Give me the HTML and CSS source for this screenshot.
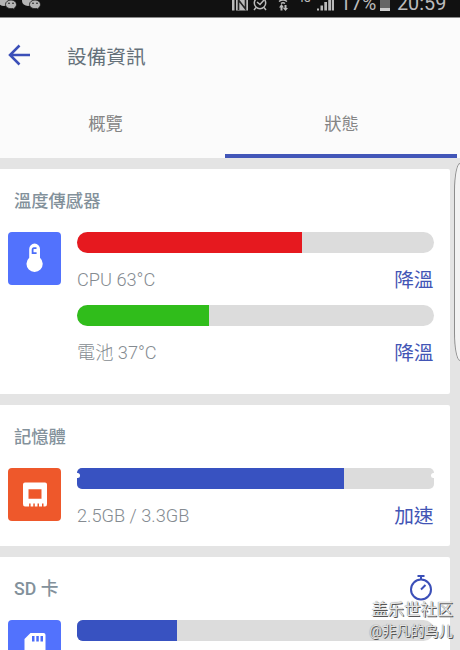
FILE: index.html
```html
<!DOCTYPE html>
<html lang="zh-Hant">
<head>
  <meta charset="utf-8">
  <title>設備資訊</title>
  <link rel="stylesheet" href="styles.css">
</head>
<body>
  <div class="statusbar">
    <svg class="status-chat" width="42" height="17" viewBox="0 0 42 17">
      <g fill="#b5b5b5">
        <ellipse cx="4" cy="1" rx="6" ry="5"/>
        <ellipse cx="28" cy="1" rx="6" ry="5"/>
      </g>
      <g fill="#b5b5b5" stroke="#111" stroke-width=".8">
        <path d="M11 0c3 0 5.500 2 5.500 4.400 0 1.500-.8 2.700-2 3.500l.2 1.600-2-1c-4 .7-7.200-1.300-7.200-4.100C5.500 2 8 0 11 0z"/>
        <path d="M35 0c3 0 5.500 2 5.500 4.400 0 1.500-.8 2.700-2 3.500l.2 1.600-2-1c-4 .7-7.200-1.300-7.200-4.100C29.500 2 32 0 35 0z"/>
      </g>
      <g fill="#111">
        <circle cx="9" cy="3.200" r=".8"/><circle cx="13" cy="3.200" r=".8"/>
        <circle cx="33" cy="3.200" r=".8"/><circle cx="37" cy="3.200" r=".8"/>
      </g>
    </svg>
    <svg class="status-icons" width="102" height="17" viewBox="0 0 102 17">
      <path d="M0 0h2.500v10.500H0zM4 0h12v10.500H4z" fill="#bbb"/>
      <path d="M6.500 10V0l7 9V0" fill="none" stroke="#222" stroke-width="1.600"/>
      <g fill="none" stroke="#bbb" stroke-width="1.500">
        <circle cx="28" cy="3" r="5.700"/>
        <path d="M25 2l3 2.500L32 0M24 7.500l-2 2.500M32 7.500l2 2.500"/>
        <path d="M47 1.500q4-3 8 0M49 3.500q2-1.600 4 0"/>
      </g>
      <path d="M48.500 10.500v-3H47L49.500 4l2.500 3.500h-1.500v3zM52.500 5h2v3H56l-2.500 3L51 8h1.500z" fill="#bbb"/>
      <path d="M85 10.500V8.500h2v2zM88.500 10.500v-5H91v5zM92.300 10.500V2H95v8.500zM96.200 10.500V0H99v10.500zM99.800 10.500V0h2.200v10.500z" fill="#bbb"/>
    </svg>
    <span class="status-net">4G</span>
    <span class="status-percent">17%</span>
    <span class="status-battery"></span>
    <span class="status-time">20:59</span>
  </div>

  <header class="header">
    <div class="toolbar">
      <svg class="back" width="22" height="22" viewBox="0 0 22 22">
        <path d="M11.500 1.500L2 11l9.500 9.500M2 11h20" fill="none" stroke="#3b4fb8" stroke-width="2.500"/>
      </svg>
      <h1>設備資訊</h1>
    </div>
    <nav class="tabs">
      <a class="tab">概覽</a>
      <a class="tab active">狀態</a>
    </nav>
  </header>

  <main>
    <section class="card card-temp">
      <div class="card-head"><h2>溫度傳感器</h2></div>
      <div class="card-body">
        <div class="icon blue">
          <svg width="53" height="53" viewBox="0 0 53 53">
            <path d="M21.200 17a5.400 5.400 0 0 1 10.800 0v8.800a8.100 8.100 0 1 1-10.800 0z" fill="#fff"/>
            <path d="M28.500 16.200h-2.700a1.200 1.200 0 0 0-1.200 1.200v3.800h4" fill="none" stroke="#4a6cfa" stroke-width="1.800"/>
          </svg>
        </div>
        <div class="meters">
          <div class="bar"><div class="fill red" style="width: 63%"></div></div>
          <div class="row"><span>CPU 63°C</span><a>降溫</a></div>
          <div class="bar"><div class="fill green" style="width: 37%"></div></div>
          <div class="row"><span>電池 37°C</span><a>降溫</a></div>
        </div>
      </div>
    </section>

    <section class="card card-memory">
      <div class="card-head"><h2>記憶體</h2></div>
      <div class="card-body">
        <div class="icon orange">
          <svg width="53" height="53" viewBox="0 0 53 53">
            <path fill="#fff" fill-rule="evenodd" d="M17 14.500h20q2 0 2 2V36q0 2.500-2 2.500h-1.500V35.500h-1.500v3h-3v-3h-1.500v3h-2.700v-3h-1.500v3h-2.700v-3h-1.500v3H17q-2 0-2-2.500V16.500q0-2 2-2zM20.500 21.200v9.500h13v-9.500z"/>
          </svg>
        </div>
        <div class="meters">
          <div class="bar notched"><div class="fill indigo" style="width: 75%"></div></div>
          <div class="row"><span>2.5GB / 3.3GB</span><a>加速</a></div>
        </div>
      </div>
    </section>

    <section class="card card-sd">
      <div class="card-head">
        <h2>SD 卡</h2>
        <svg class="timer" width="24" height="27" viewBox="0 0 24 27">
          <g fill="none" stroke="#3b4fb8" stroke-width="2">
            <circle cx="12" cy="15.500" r="10"/>
            <path d="M8.500 2.100h7M12 2v4M12 15.500l4.500-4.500"/>
          </g>
        </svg>
      </div>
      <div class="card-body">
        <div class="icon blue">
          <svg width="53" height="31" viewBox="0 0 53 31">
            <path d="M22.500 13H35.500q2 0 2 2V31h-21V19z" fill="#fff"/>
            <path d="M24 16h2.500v5.500H24zM28.300 16h2.500v5.500h-2.500zM32.500 16H35v5.500h-2.500z" fill="#4a6cfa"/>
          </svg>
        </div>
        <div class="meters">
          <div class="bar"><div class="fill indigo" style="width: 28%"></div></div>
        </div>
      </div>
    </section>
  </main>

  <div class="edge-handle"></div>
  <div class="watermark">
    <div class="site">盖乐世社区</div>
    <div class="user">@非凡的鸟儿</div>
  </div>
</body>
</html>
```
FILE: styles.css
```css
* {
  box-sizing: border-box;
}

body {
  margin: 0;
  width: 460px;
  height: 650px;
  overflow: hidden;
  position: relative;
  background: #e4e4e4;
  font-family: Roboto, "Noto Sans CJK TC", sans-serif;
}

h1, h2 {
  margin: 0;
}

.statusbar {
  display: flex;
  position: relative;
  height: 18px;
  overflow: hidden;
  background: #111;
  border-bottom: 1px solid #8a8a8a;
  color: #bbb;
  white-space: nowrap;
}

.status-icons {
  margin-left: 190px;
}

/* text cut off by the top edge of the screen */
.status-net,
.status-percent,
.status-time,
.status-battery {
  position: absolute;
}

.status-net {
  left: 298px;
  top: -7px;
  font-size: 10px;
  line-height: 12px;
  font-weight: 500;
}

.status-percent {
  left: 340px;
  top: -8px;
  font-size: 19.500px;
  line-height: 24px;
}

.status-battery {
  left: 380px;
  top: 0;
  width: 10px;
  height: 11px;
  background: #666;
  border-bottom: 3px solid #ccc;
}

.status-time {
  left: 397px;
  top: -8px;
  font-size: 19.800px;
  line-height: 24px;
}

.header {
  height: 140px;
  background: #fbfbfb;
}

.toolbar {
  display: flex;
  align-items: center;
  height: 73px;
  padding-left: 8px;
}

.toolbar h1 {
  margin: 1px 0 0 37px;
  font-size: 19.700px;
  font-weight: 400;
  color: #65717a;
}

.tabs {
  display: flex;
  height: 67px;
  padding-right: 3px;
}

.tab {
  width: 225px;
  padding-right: 14px;
  text-align: center;
  font-size: 17.300px;
  line-height: 67px;
  color: #858585;
}

.tab.active {
  width: 232px;
  padding: 0 0 0 1px;
  border-bottom: 4px solid #4256b8;
}

main {
  padding: 11px 10.500px 0 0;
}

.card {
  margin-bottom: 11px;
  background: #fff;
  border-radius: 0 2px 2px 0;
}

.card-temp {
  height: 225px;
}

.card-memory {
  height: 141px;
}

/* last card is cut by the bottom of the screen */
.card-sd {
  height: 93px;
  margin-bottom: 0;
  border-radius: 0 2px 0 0;
}

.card-head {
  display: flex;
  justify-content: space-between;
  height: 62.500px;
  padding: 17px 16px 0 14px;
}

.card-head h2 {
  font-size: 17.300px;
  line-height: 31px;
  font-weight: 500;
  color: #83919b;
}

.card-sd h2 {
  font-size: 17.700px;
  line-height: 30px;
}

.timer {
  margin-right: 1px;
}

.card-body {
  display: flex;
  padding: 0 16px 0 8px;
}

.icon {
  flex: none;
  width: 53px;
  height: 53px;
  margin-right: 16px;
  border-radius: 4px;
}

.card-sd .icon {
  height: 30px;
  border-radius: 4px 4px 0 0;
  overflow: hidden;
}

.icon svg {
  display: block;
}

.blue {
  background: #5272fd;
}

.orange {
  background: #ee582b;
}

.meters {
  flex: 1;
}

.bar {
  position: relative;
  height: 21px;
  overflow: hidden;
  background: #dcdcdc;
  border-radius: 11px;
}

.card-sd .bar {
  border-radius: 6px 11px 11px 6px;
}

.bar.notched {
  border-radius: 5px;
}

/* small bites at both ends of the memory bar */
.notched::before,
.notched::after {
  content: "";
  position: absolute;
  top: 5px;
  width: 5px;
  height: 5px;
  border-radius: 50%;
  background: #fff;
}

.notched::before {
  left: -2px;
}

.notched::after {
  right: -2px;
}

.fill {
  height: 100%;
}

.red {
  background: #e6191f;
}

.green {
  background: #30bd1b;
}

.indigo {
  background: #3852c1;
}

.row {
  display: flex;
  justify-content: space-between;
  height: 52.500px;
  line-height: 54px;
  font-size: 18.200px;
  font-weight: 300;
  color: #858b91;
}

.row a {
  font-size: 19.700px;
  line-height: 56px;
  font-weight: 400;
  color: #4255b5;
}

.edge-handle {
  position: absolute;
  left: 454px;
  top: 163px;
  width: 6px;
  height: 198px;
  border: 1px solid #8d8d8d;
  border-right: none;
  border-radius: 6px 0 0 6px / 28px 0 0 28px;
  background: #f3f3f3;
}

.watermark {
  position: absolute;
  right: 7px;
  top: 600px;
  text-align: right;
  color: #e6e6e6;
  font-family: Roboto, "Noto Sans CJK SC", sans-serif;
  text-shadow: 1px 1px 0 #555, 0 0 1px #666;
}

.site {
  font-size: 16.300px;
  line-height: 20px;
}

.user {
  font-size: 14.200px;
  line-height: 22px;
}
```
